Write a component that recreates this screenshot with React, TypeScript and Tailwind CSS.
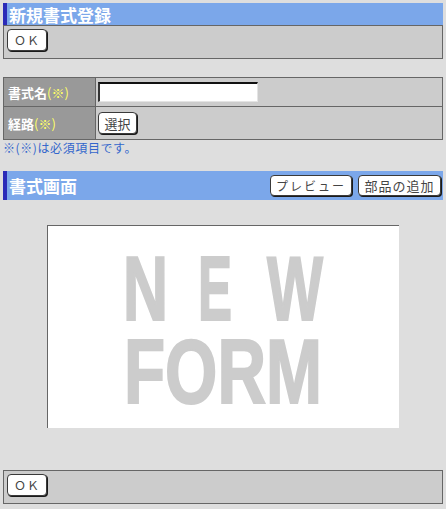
const font = { fontFamily: '"Noto Sans CJK JP", "Noto Sans", sans-serif' };

const Btn = ({ children, className = "" }: { children: React.ReactNode; className?: string }) => (
	<button
		className={`flex items-center justify-center rounded-[4px] border border-[#3a3a3a] bg-white text-[12px] leading-none text-[#444] shadow-[1px_1px_0_#1a1a1a] ${className}`}>
		{children}
	</button>
);

const Header = ({ title, children, h }: { title: string; children?: React.ReactNode; h: string }) => (
	<div className={`flex ${h} items-center justify-between border-l-4 border-[#2b2bb8] bg-[#7ba7ea] pl-[2px] pr-[2px]`}>
		<span className="text-[17px] font-bold leading-none text-white">{title}</span>
		<div className="flex gap-[6px]">{children}</div>
	</div>
);

const OkPanel = () => (
	<div className="h-[34px] border border-[#666] bg-[#cccccc] pl-[3px] pt-[3px]">
		<Btn className="h-[22px] w-[40px] tracking-[1px]">ＯＫ</Btn>
	</div>
);

export default function App() {
	return (
		<div className="h-[509px] w-[446px] bg-[#dedede] px-[3px] pt-[3px]" style={font}>
			<Header title="新規書式登録" h="h-[22px]" />
			<OkPanel />

			<table className="mt-[18px] w-[440px] border-collapse border border-[#666]">
				<tbody>
					<tr className="h-[29px]">
						<th className="w-[92px] border border-[#666] bg-[#999] pl-[4px] text-left text-[13px] font-bold leading-none text-white">
							書式名<span className="font-normal text-[#ffff66]">(※)</span>
						</th>
						<td className="border border-[#666] bg-[#cccccc] pl-[2px]">
							<input
								type="text"
								className="block h-[20px] w-[160px] border-b border-l-2 border-r border-t-2 border-b-[#e4e4e4] border-l-[#333] border-r-[#e4e4e4] border-t-[#111] bg-white"
							/>
						</td>
					</tr>
					<tr className="h-[33px]">
						<th className="border border-[#666] bg-[#999] pl-[4px] text-left text-[13px] font-bold leading-none text-white">
							経路<span className="font-normal text-[#ffff66]">(※)</span>
						</th>
						<td className="border border-[#666] bg-[#cccccc] pl-[2px]">
							<Btn className="h-[22px] w-[39px] text-[13px]">選択</Btn>
						</td>
					</tr>
				</tbody>
			</table>
			<p className="mt-[1px] text-[12px] leading-[13px] tracking-[0.6px] text-[#3366cc]">※(※)は必須項目です。</p>

			<div className="mt-[17px]">
				<Header title="書式画面" h="h-[29px]">
					<Btn className="h-[21px] w-[82px] tracking-[2px]">プレビュー</Btn>
					<Btn className="h-[21px] w-[83px] text-[13px] tracking-[1px]">部品の追加</Btn>
				</Header>
			</div>

			<div className="mt-[25px] flex justify-center">
				<div className="h-[203px] w-[352px] border-l border-t border-[#666] bg-white">
					<svg width="351" height="202" viewBox="0 0 351 202">
						<g
							fill="#cccccc"
							stroke="#cccccc"
							strokeWidth="2"
							fontFamily="Liberation Sans, Arial, sans-serif"
							fontWeight="bold"
							fontSize="90">
							<text y="94">
								<tspan x="75" textLength="45" lengthAdjust="spacingAndGlyphs">N</tspan>
								<tspan x="150" textLength="34" lengthAdjust="spacingAndGlyphs">E</tspan>
								<tspan x="219" textLength="56" lengthAdjust="spacingAndGlyphs">W</tspan>
							</text>
							<text x="76" y="177" textLength="198" lengthAdjust="spacingAndGlyphs">FORM</text>
						</g>
					</svg>
				</div>
			</div>

			<div className="mt-[42px]">
				<OkPanel />
			</div>
		</div>
	);
}
